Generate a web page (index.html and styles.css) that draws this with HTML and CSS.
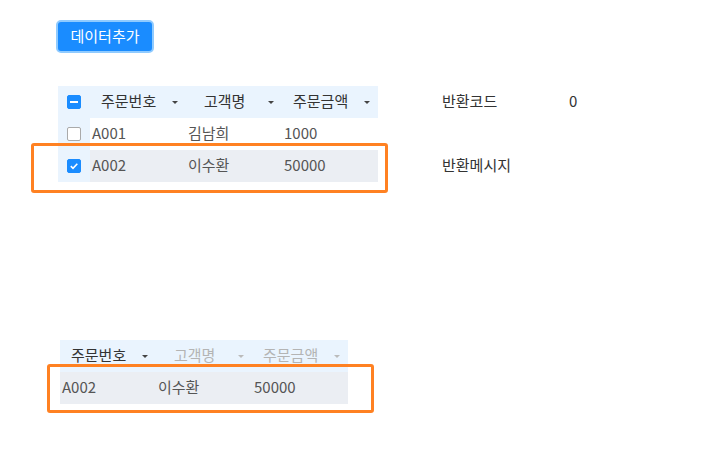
FILE: index.html
```html
<!DOCTYPE html>
<html lang="ko">
<head>
    <meta charset="UTF-8">
    <meta name="viewport" content="width=device-width, initial-scale=1.0">
    <title>주문 목록</title>
    <link rel="stylesheet" href="styles.css">
</head>
<body>
    <div class="page">
        <button class="btn-add">데이터추가</button>

        <!-- Top area: order grid + result info -->
        <div class="top-area">
            <div class="grid grid-main">
                <div class="check-col">
                    <div class="cell-check"><span class="chk chk-on"><span class="dash"></span></span></div>
                    <div class="cell-check"><span class="chk"></span></div>
                    <div class="cell-check">
                        <span class="chk chk-on">
                            <svg width="10" height="10" viewBox="0 0 10 10"><path d="M1.8 5.2 L4 7.3 L8.3 2.8" fill="none" stroke="#fff" stroke-width="1.6"/></svg>
                        </span>
                    </div>
                </div>
                <div class="data-cols">
                    <div class="row head">
                        <div class="hcell">주문번호<span class="arrow"></span></div>
                        <div class="hcell mid">고객명<span class="arrow"></span></div>
                        <div class="hcell">주문금액<span class="arrow"></span></div>
                    </div>
                    <div class="row">
                        <div class="cell">A001</div>
                        <div class="cell">김남희</div>
                        <div class="cell">1000</div>
                    </div>
                    <div class="row selected">
                        <div class="cell">A002</div>
                        <div class="cell">이수환</div>
                        <div class="cell">50000</div>
                    </div>
                </div>
                <div class="mark mark-main"></div>
            </div>

            <div class="result">
                <span class="label">반환코드</span>
                <span class="value">0</span>
                <span class="label msg">반환메시지</span>
            </div>
        </div>

        <!-- Bottom grid: selected row -->
        <div class="grid grid-sub">
            <div class="data-cols">
                <div class="row head">
                    <div class="hcell">주문번호<span class="arrow"></span></div>
                    <div class="hcell mid off">고객명<span class="arrow"></span></div>
                    <div class="hcell off">주문금액<span class="arrow"></span></div>
                </div>
                <div class="row selected">
                    <div class="cell">A002</div>
                    <div class="cell">이수환</div>
                    <div class="cell">50000</div>
                </div>
            </div>
            <div class="mark mark-sub"></div>
        </div>
    </div>
</body>
</html>
```

FILE: styles.css
```css
/* Reset */
* {
    margin: 0;
    padding: 0;
    box-sizing: border-box;
}

html, body {
    height: 100%;
}

body {
    font-family: "Noto Sans CJK KR", "Noto Sans", sans-serif;
    font-size: 15px;
    color: #555;
    background: #fff;
}

.page {
    min-height: 100%;
    padding: 20px 0 40px 56px;
}

/* Button */
.btn-add {
    display: block;
    width: 98px;
    height: 33px;
    padding-bottom: 2px;
    background: #1a8cff;
    color: #fff;
    font-family: inherit;
    font-size: 15px;
    border: 2px solid #90cbff;
    border-radius: 5px;
}

/* Layout */
.top-area {
    display: flex;
    margin-top: 33px;
    margin-left: 2px;
}

.grid {
    position: relative;
    display: flex;
}

.grid-sub {
    margin-top: 158px;
    margin-left: 4px;
    width: 288px;
}

/* Checkbox column */
.check-col {
    width: 32px;
    background: #eaf4fe;
}

.cell-check {
    height: 32px;
    display: flex;
    align-items: center;
    justify-content: center;
}

.chk {
    width: 14px;
    height: 14px;
    border: 1px solid #aaa;
    border-radius: 2px;
    background: #fff;
    display: flex;
    align-items: center;
    justify-content: center;
}

.chk-on {
    background: #1a8cff;
    border-color: #1a8cff;
}

.dash {
    width: 8px;
    height: 2px;
    background: #fff;
}

/* Data columns */
.row {
    display: grid;
    grid-template-columns: 96px 96px 96px;
    height: 32px;
}

.row.head {
    background: #eaf4fe;
}

.row.selected {
    background: #ebeef3;
}

.hcell,
.cell {
    line-height: 29px;
}

.hcell {
    position: relative;
    padding-left: 11px;
    color: #333;
}

.hcell.mid {
    padding-left: 18px;
}

.hcell.off {
    color: #b4b4b4;
}

.arrow {
    position: absolute;
    right: 8px;
    top: 15px;
    border-left: 3px solid transparent;
    border-right: 3px solid transparent;
    border-top: 3px solid #444;
}

.hcell.off .arrow {
    border-top-color: #bbb;
}

.cell {
    padding-left: 2px;
}

/* Highlight marks */
.mark {
    position: absolute;
    border: 3px solid #ff8122;
    border-radius: 3px;
}

.mark-main {
    left: -27px;
    top: 57px;
    width: 357px;
    height: 50px;
}

.mark-sub {
    left: -13px;
    top: 24px;
    width: 327px;
    height: 49px;
}

/* Result info */
.result {
    margin-left: 64px;
    display: grid;
    grid-template-columns: 127px auto;
    grid-auto-rows: 32px;
    line-height: 29px;
    color: #333;
}

.result .msg {
    grid-row: 3;
    grid-column: 1;
}
```
